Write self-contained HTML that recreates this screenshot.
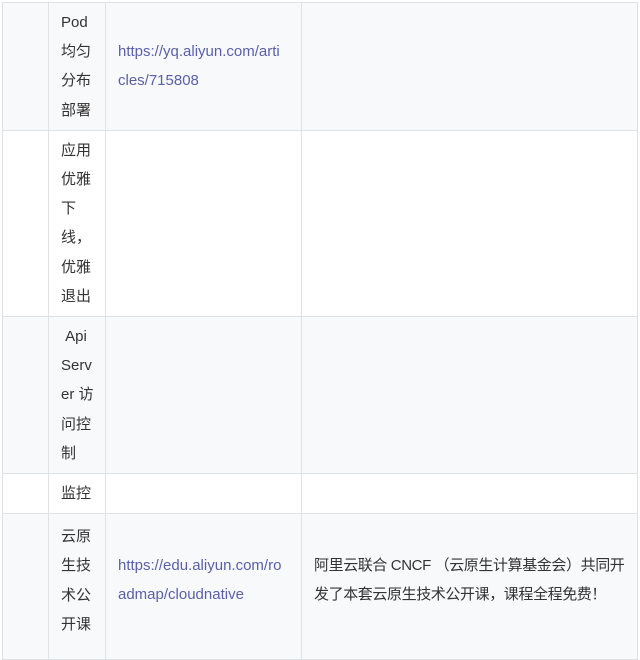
<!DOCTYPE html>
<html><head><meta charset="utf-8"><style>
body{margin:0;background:#fff;width:640px;height:641px;overflow:hidden;font-family:"Liberation Sans","Noto Sans CJK SC",sans-serif;font-size:15px;color:#333}
table{position:absolute;left:2px;top:2px;border-collapse:collapse;table-layout:fixed;width:635px}
td{border:1px solid #dfe2e5;padding:5px 12px 5px;line-height:29.2px;vertical-align:middle;white-space:nowrap;overflow:hidden}
tr.g td{background:#f8f9fb}
tr.last td{padding-top:8px;padding-bottom:20px;vertical-align:top}
tr.last td.m{padding-top:37px}
a{color:#5a5fa8;text-decoration:none}
.n{letter-spacing:-0.4px}
</style></head><body>
<table>
<col style="width:46px"><col style="width:57px"><col style="width:196px"><col style="width:336px">
<tr class="g"><td></td><td>Pod<br>均匀<br>分布<br>部署</td><td><a>https://yq.aliyun.com/arti<br>cles/715808</a></td><td></td></tr>
<tr><td></td><td>应用<br>优雅<br>下<br>线，<br>优雅<br>退出</td><td></td><td></td></tr>
<tr class="g"><td></td><td>&nbsp;Api<br>Serv<br>er 访<br>问控<br>制</td><td></td><td></td></tr>
<tr><td></td><td>监控</td><td></td><td></td></tr>
<tr class="g last"><td></td><td>云原<br>生技<br>术公<br>开课</td><td class="m"><a>https://edu.aliyun.com/ro<br>admap/cloudnative</a></td><td class="n m">阿里云联合 CNCF （云原生计算基金会）共同开<br>发了本套云原生技术公开课，课程全程免费！</td></tr>
</table>
</body></html>
